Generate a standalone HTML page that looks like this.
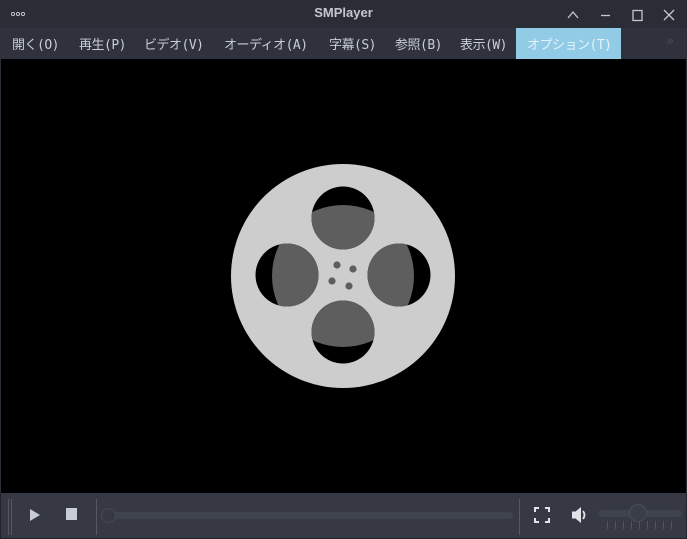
<!DOCTYPE html>
<html><head><meta charset="utf-8"><style>
*{margin:0;padding:0;box-sizing:border-box}
body{width:687px;height:539px;background:#2b2e37;position:relative;overflow:hidden;font-family:"Liberation Sans","Noto Sans CJK JP",sans-serif;}
#title{position:absolute;left:0;top:0;width:687px;height:28px;background:#2a2d36;}
#title .t{position:absolute;left:0;width:687px;top:5px;text-align:center;color:#c4c7cf;font-size:13px;font-weight:bold;}
#menu{position:absolute;left:0;top:28px;width:687px;height:31px;background:#2f323c;}
#menu span{position:absolute;top:6px;color:#c8ccd4;font-size:13px;font-family:"DejaVu Sans Mono","Noto Sans CJK JP",monospace;letter-spacing:-0.5px;white-space:nowrap}
#hl{position:absolute;left:516px;top:0;width:105px;height:31px;background:#92cbe6}
#video{position:absolute;left:1px;top:59px;width:685px;height:434px;background:#000}
#ctrl{position:absolute;left:0;top:493px;width:687px;height:46px;background:#363944;border:1px solid #22242b;border-top:none}
.v{position:absolute;top:6px;width:1px;height:36px;background:#545866}
</style></head><body>
<div id="title">
<svg style="position:absolute;left:11px;top:12px" width="16" height="4"><circle cx="2" cy="2" r="1.6" fill="none" stroke="#c4c7cf" stroke-width="1"/><circle cx="7" cy="2" r="1.6" fill="none" stroke="#c4c7cf" stroke-width="1"/><circle cx="12" cy="2" r="1.6" fill="none" stroke="#c4c7cf" stroke-width="1"/></svg>
<div class="t">SMPlayer</div>
<svg style="position:absolute;left:566px;top:8px" width="110" height="14" fill="none" stroke="#c4c7cf" stroke-width="1.3">
<path d="M2 10 L7 4 L12 10"/><path d="M35 7.5 H44"/><rect x="67" y="2.5" width="9" height="10"/><path d="M98 2 L108 12 M108 2 L98 12"/></svg>
</div>
<div id="menu">
<div id="hl"></div>
<span style="left:12px">開く(O)</span>
<span style="left:79px">再生(P)</span>
<span style="left:144px">ビデオ(V)</span>
<span style="left:224px">オーディオ(A)</span>
<span style="left:329px">字幕(S)</span>
<span style="left:395px">参照(B)</span>
<span style="left:460px">表示(W)</span>
<span style="left:527px;color:#e6f3fa">オプション(T)</span>
<span style="left:666px;color:#4a4e5a">»</span>
</div>
<div id="video">
<svg style="position:absolute;left:0;top:0" width="685" height="434">
<defs><clipPath id="c"><circle cx="342" cy="217" r="71"/></clipPath></defs>
<circle cx="342" cy="217" r="112" fill="#cdcdcd"/>
<g fill="#000"><circle cx="342" cy="159" r="31.5"/><circle cx="286" cy="216" r="31.5"/><circle cx="398" cy="216" r="31.5"/><circle cx="342" cy="273" r="31.5"/></g>
<g fill="#5e5e5e" clip-path="url(#c)"><circle cx="342" cy="159" r="31.5"/><circle cx="286" cy="216" r="31.5"/><circle cx="398" cy="216" r="31.5"/><circle cx="342" cy="273" r="31.5"/></g>
<g fill="#5e5e5e"><circle cx="336" cy="206" r="3.6"/><circle cx="352" cy="210" r="3.6"/><circle cx="331" cy="222" r="3.6"/><circle cx="348" cy="227" r="3.6"/></g>
</svg>
</div>
<div id="ctrl">
<div class="v" style="left:7px"></div><div class="v" style="left:10px"></div>
<svg style="position:absolute;left:28px;top:15px" width="12" height="14"><path d="M1 1 L11 7 L1 13Z" fill="#c8ccd4"/></svg>
<div style="position:absolute;left:65px;top:15px;width:11px;height:12px;background:#c8ccd4"></div>
<div class="v" style="left:95px"></div>
<div style="position:absolute;left:100px;top:19px;width:412px;height:7px;border-radius:4px;background:#3f434e"></div>
<div style="position:absolute;left:100px;top:15px;width:15px;height:15px;border-radius:50%;background:#363944;border:1px solid #454955"></div>
<div class="v" style="left:518px"></div>
<svg style="position:absolute;left:533px;top:14px" width="16" height="16" fill="none" stroke="#e0e3e8" stroke-width="2"><path d="M1 5V1H5M11 1H15V5M15 11V15H11M5 15H1V11"/></svg>
<svg style="position:absolute;left:570px;top:12px" width="18" height="20"><path d="M1 6.5H4.5L10 2V18L4.5 13.5H1Z" fill="#e0e3e8"/><path d="M12 6Q15 10 12 14" stroke="#e0e3e8" stroke-width="1.8" fill="none"/></svg>
<div style="position:absolute;left:597px;top:17px;width:84px;height:7px;border-radius:4px;background:#3f434e"></div>
<div style="position:absolute;left:628px;top:11px;width:18px;height:18px;border-radius:50%;background:#3a3e49;border:1px solid #4a4e5a"></div>
<svg style="position:absolute;left:604px;top:27px" width="70" height="10" stroke="#50545f" stroke-width="1"><path d="M2.5 1V9M10.5 1V9M18.5 1V9M26.5 1V9M34.5 1V9M42.5 1V9M50.5 1V9M58.5 1V9M66.5 1V9"/></svg>
</div>
</body></html>
